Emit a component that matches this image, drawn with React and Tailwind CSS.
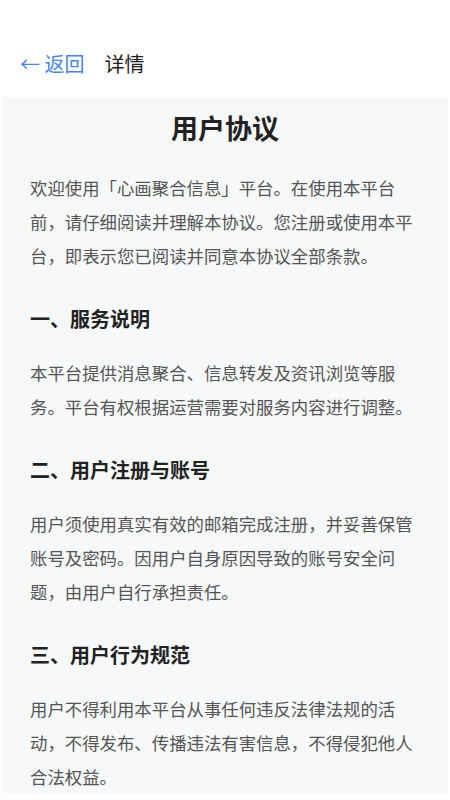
export default function App() {
  const sections = [
    {
      title: '一、服务说明',
      body: '本平台提供消息聚合、信息转发及资讯浏览等服务。平台有权根据运营需要对服务内容进行调整。',
    },
    {
      title: '二、用户注册与账号',
      body: '用户须使用真实有效的邮箱完成注册，并妥善保管账号及密码。因用户自身原因导致的账号安全问题，由用户自行承担责任。',
    },
    {
      title: '三、用户行为规范',
      body: '用户不得利用本平台从事任何违反法律法规的活动，不得发布、传播违法有害信息，不得侵犯他人合法权益。',
    },
  ];

  return (
    <div
      className="h-[800px] overflow-hidden bg-white"
      style={{ fontFamily: '"Noto Sans CJK SC", "Noto Sans", sans-serif' }}
    >
      {/* Header */}
      <div className="flex h-[97px] items-end gap-[20px] pb-[19px] pl-[20px]">
        <button className="text-[20px] leading-[28px] text-[#4a86e0]">← 返回</button>
        <span className="text-[20px] leading-[28px] text-[#222]">详情</span>
      </div>

      {/* Content */}
      <div className="mx-[2px] h-[696px] bg-[#f7f8fa] px-[28px] pt-[13px]">
        <h1 className="text-center text-[27px] font-bold leading-[36px] text-[#222]">用户协议</h1>
        <p className="mt-[25px] text-[17.4px] leading-[34px] text-[#555]">
          欢迎使用「心画聚合信息」平台。在使用本平台前，请仔细阅读并理解本协议。您注册或使用本平台，即表示您已阅读并同意本协议全部条款。
        </p>
        {sections.map((s) => (
          <div key={s.title}>
            <h2 className="mt-[32px] text-[20px] font-bold leading-[28px] text-[#222]">{s.title}</h2>
            <p className="mt-[23px] text-[17.4px] leading-[34px] text-[#555]">{s.body}</p>
          </div>
        ))}
      </div>
    </div>
  );
}
